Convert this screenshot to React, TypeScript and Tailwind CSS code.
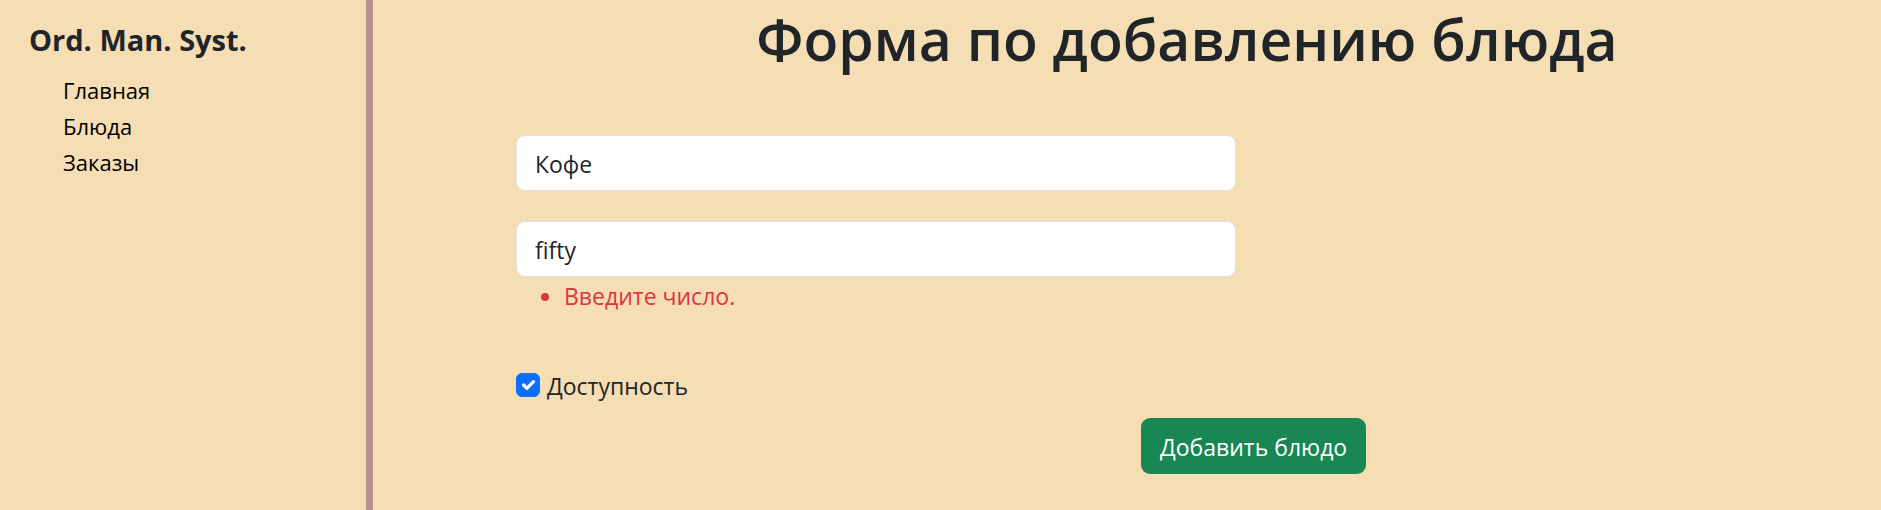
const field =
  "block h-14 w-full max-w-[720px] rounded-[9px] border border-[#dee2e6] bg-white px-[18px] pt-[2px]";

export default function App() {
  return (
    <div className="flex min-h-screen bg-[#f5deb3] font-['Open_Sans','Noto_Sans',sans-serif] text-[23px] text-[#212529]">
      <aside className="w-[373px] shrink-0 border-r-[7px] border-[#bc8f8f] px-[29px] pt-[17px]">
        <a href="#home" className="block text-[29px] leading-[45px] font-bold">Ord. Man. Syst.</a>
        <nav className="mt-[10px] flex flex-col items-start pl-[34px] text-[22px] leading-9 text-black">
          <a href="#main">Главная</a>
          <a href="#dishes">Блюда</a>
          <a href="#orders">Заказы</a>
        </nav>
      </aside>
      <main className="min-w-0 grow pl-[120px]">
        <h1 className="pt-1 text-center text-[57px] leading-[70px] font-semibold">Форма по добавлению блюда</h1>
        <form className="pt-[61px] pl-[23px]" noValidate>
          <input aria-label="Название" defaultValue="Кофе" className={field} />
          <div className="pt-[30px]">
            <input aria-label="Цена" defaultValue="fifty" className={field} />
          </div>
          <ul className="list-disc pt-px pl-12 leading-9 text-[#dc3545]">
            <li>Введите число.</li>
          </ul>
          <div className="mt-[54px] flex items-start gap-[7px] leading-9">
            <span className="mt-[5px] grid size-6 shrink-0 place-items-center">
              <input
                id="available"
                type="checkbox"
                defaultChecked
                className="peer col-start-1 row-start-1 size-6 appearance-none rounded-md border border-[#dee2e6] bg-white checked:border-[#0d6efd] checked:bg-[#0d6efd]"
              />
              <svg viewBox="0 0 20 20" className="pointer-events-none invisible col-start-1 row-start-1 size-[22px] peer-checked:visible" aria-hidden="true">
                <path fill="none" stroke="#fff" strokeLinecap="round" strokeLinejoin="round" strokeWidth="3" d="m6 10 3 3 6-6" />
              </svg>
            </span>
            <label htmlFor="available">Доступность</label>
          </div>
          <button type="button" className="mt-[14px] ml-[625px] h-14 rounded-[9px] bg-[#198754] px-[19px] pt-[2px] text-white">
            Добавить блюдо
          </button>
        </form>
      </main>
    </div>
  );
}
